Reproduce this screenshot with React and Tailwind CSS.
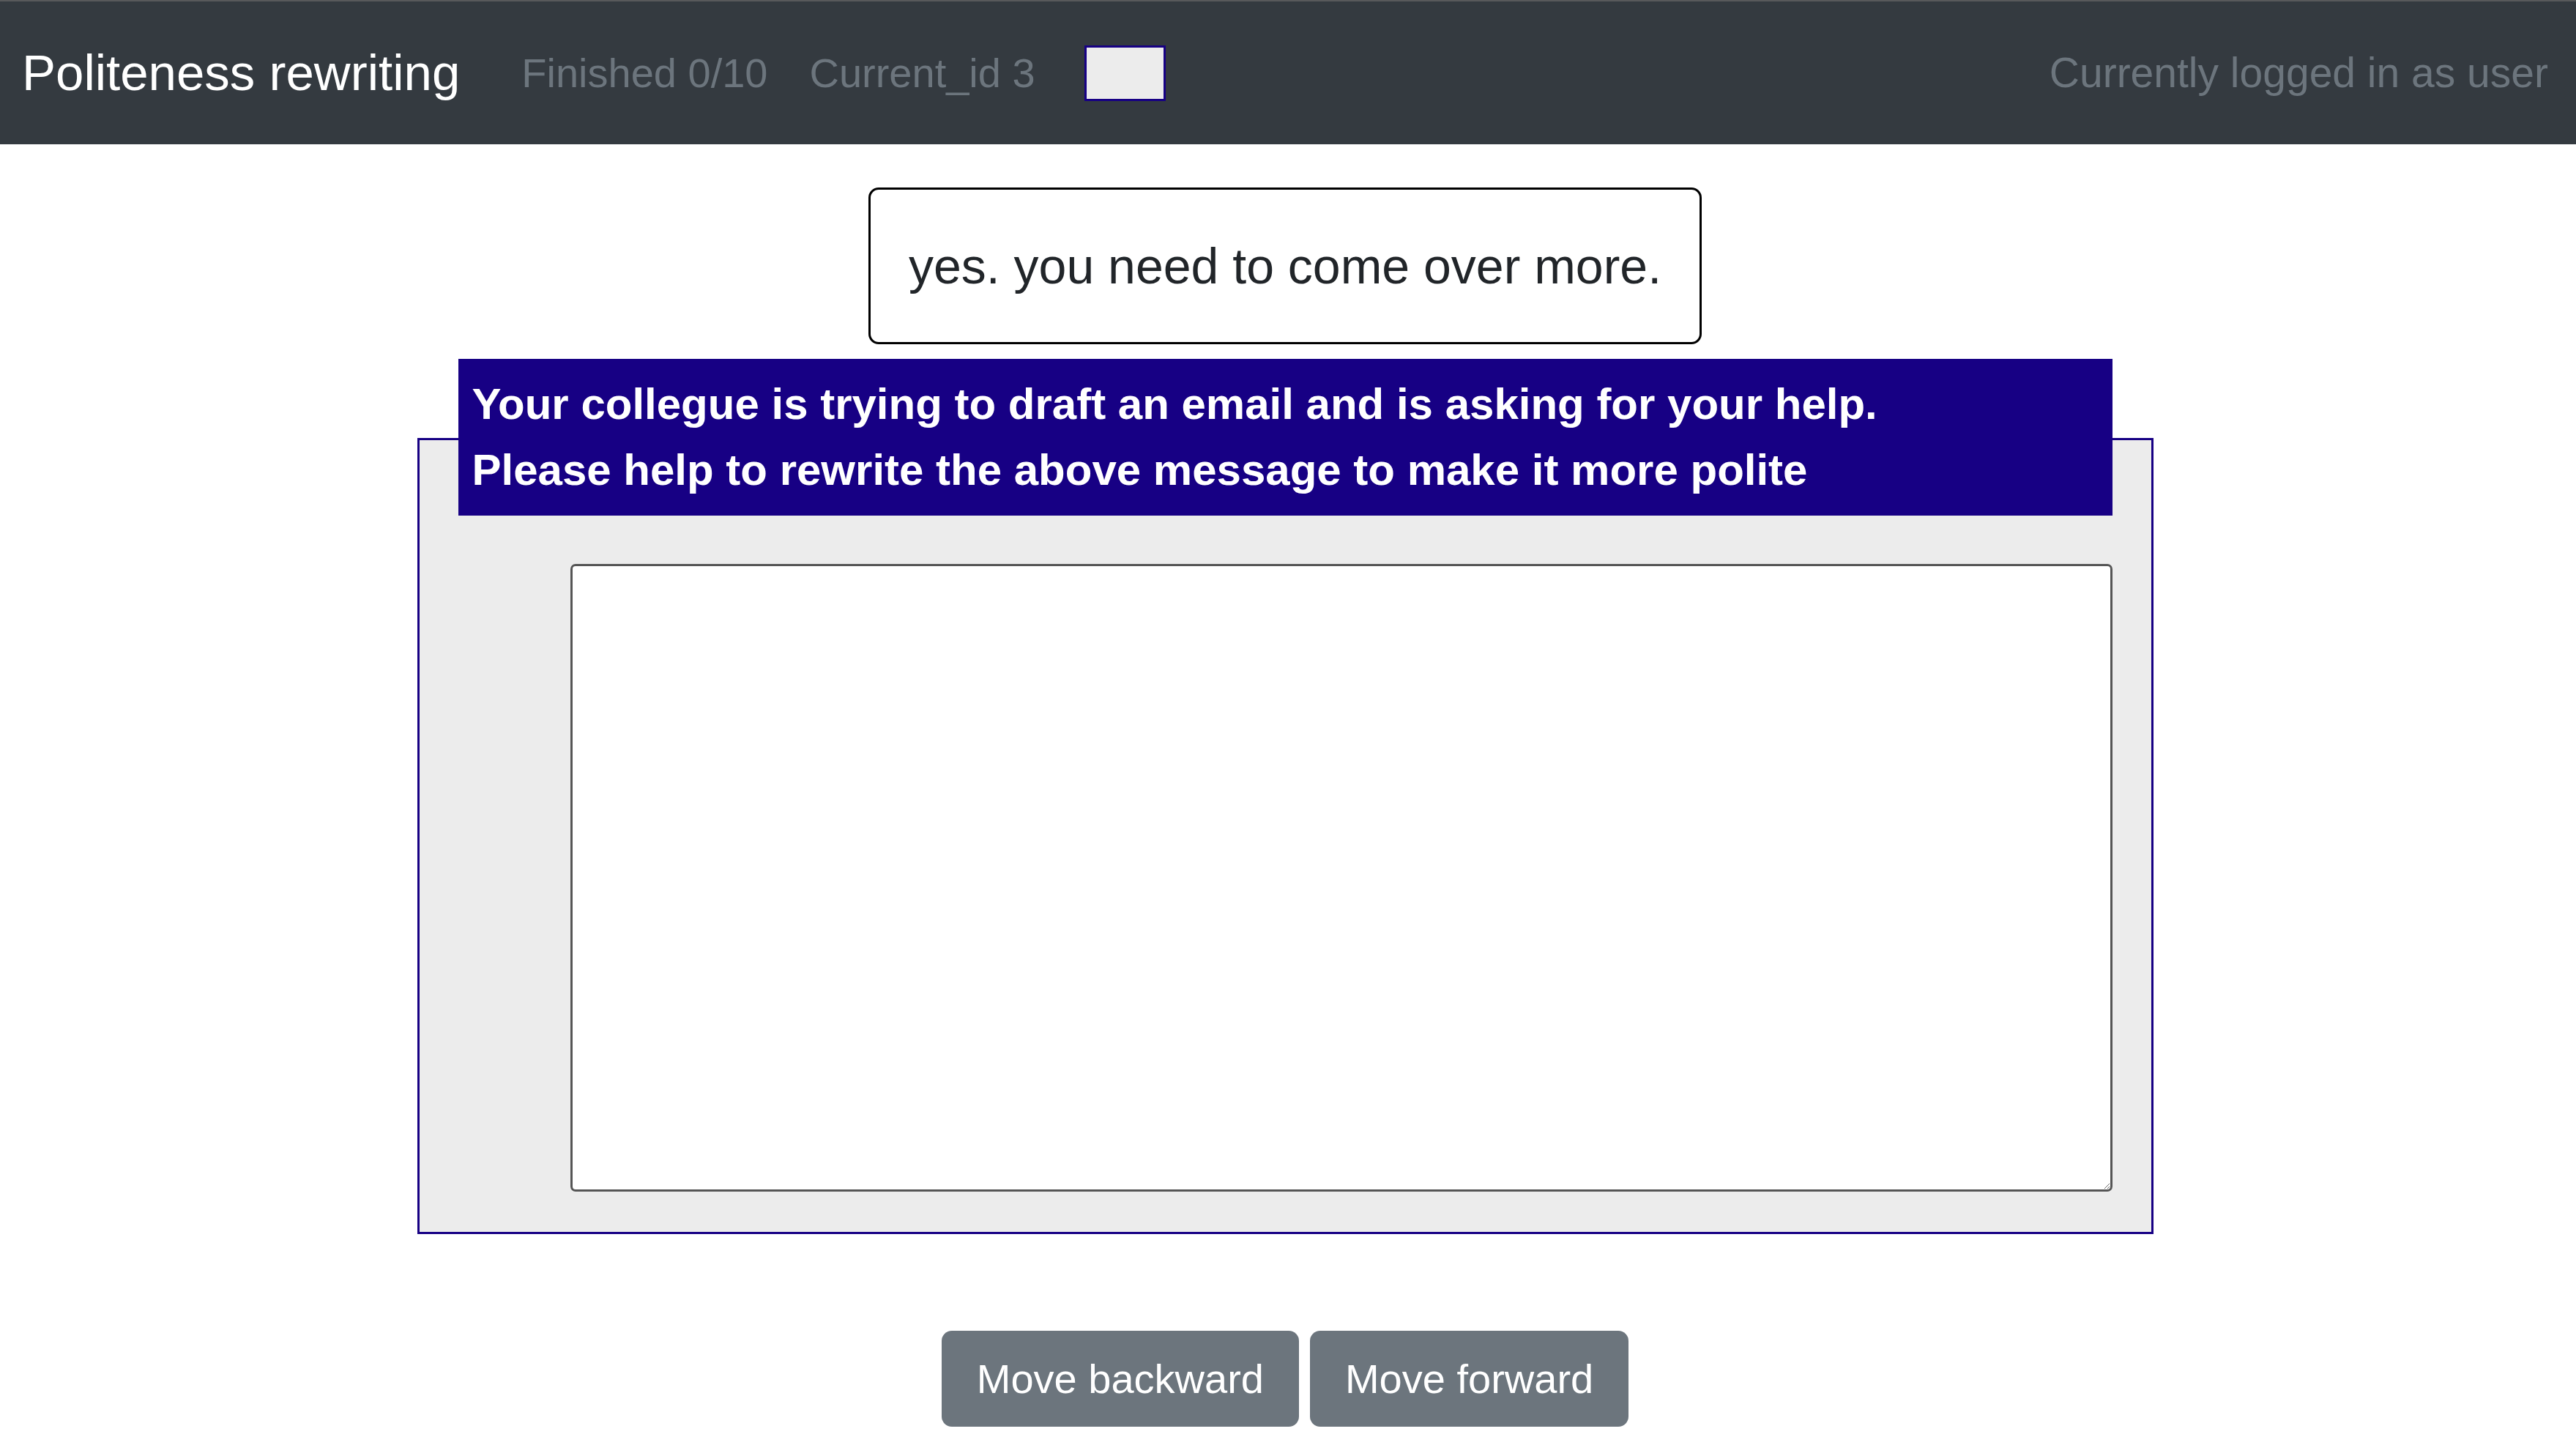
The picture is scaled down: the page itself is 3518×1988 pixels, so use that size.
import { useState } from 'react'

function NavBar() {
  return (
    <nav className="flex h-[197px] items-center border-t-2 border-[#58595b] bg-[#343a40] pl-[30px] pr-[38px]">
      <span className="text-[69px] leading-none text-white">Politeness rewriting</span>
      <span className="ml-[84px] text-[56px] leading-none text-[#6c757d]">Finished 0/10</span>
      <span className="ml-[57px] text-[56px] leading-none text-[#6c757d]">Current_id 3</span>
      <div className="ml-[67px] h-[76px] w-[111px] border-[3px] border-[#170084] bg-[#ececec]" />
      <span className="ml-auto text-[57px] leading-none text-[#6c757d]">Currently logged in as user</span>
    </nav>
  )
}

function App() {
  const [text, setText] = useState('')

  return (
    <div className="min-h-screen bg-white font-['Liberation_Sans',Arial,sans-serif]">
      <NavBar />
      <main className="flex flex-col items-center pr-[8px] pt-[59px]">
        <div className="w-[1138px] whitespace-nowrap rounded-[14px] border-[3px] border-black py-[53px] text-center text-[68px] leading-[1.5] text-[#212529]">
          yes. you need to come over more.
        </div>

        <div className="mt-[128px] w-[2371px] border-[3px] border-[#170084] bg-[#ececec] px-[53px] pb-[55px]">
          <div className="-mt-[111px] bg-[#170084] px-[19px] py-[17px] text-[60px] font-bold leading-[1.5] text-white">
            <div>Your collegue is trying to draft an email and is asking for your help.</div>
            <div>Please help to rewrite the above message to make it more polite</div>
          </div>
          <div className="mt-[66px] flex">
            <textarea
              className="ml-[153px] h-[857px] flex-1 rounded-[7px] border-[3px] border-[#555] bg-white p-4 text-[56px] outline-none"
              value={text}
              onChange={(e) => setText(e.target.value)}
            />
          </div>
        </div>

        <div className="mt-[132px] flex gap-[15px]">
          <button className="h-[131px] rounded-[14px] bg-[#6c757d] px-[48px] text-[56px] text-white" type="button">Move backward</button>
          <button className="h-[131px] rounded-[14px] bg-[#6c757d] px-[48px] text-[56px] text-white" type="button">Move forward</button>
        </div>
      </main>
    </div>
  )
}

export default App
